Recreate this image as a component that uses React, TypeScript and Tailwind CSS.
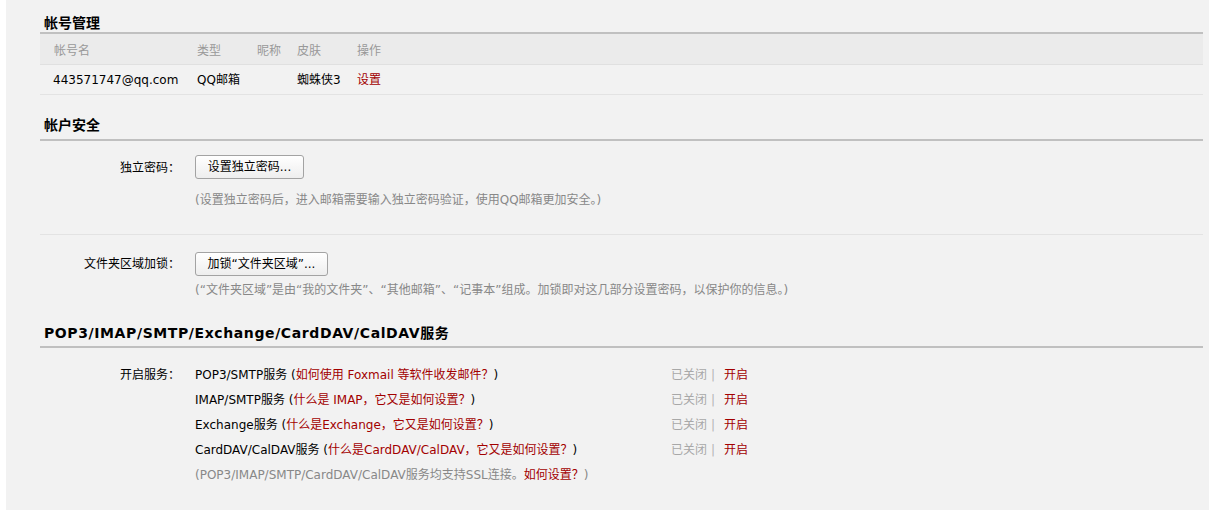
import React from "react";

const RED = "text-[#a20000]";

function Btn({ children, w }: { children: React.ReactNode; w: string }) {
  return (
    <button
      className={`h-[24px] ${w} rounded-[3px] border border-[#a3a3a3] bg-gradient-to-b from-[#ffffff] to-[#eeeeee] text-[12px] leading-[22px] text-black`}
    >
      {children}
    </button>
  );
}

function SvcRow({
  label,
  name,
  help,
}: {
  label?: string;
  name: string;
  help: React.ReactNode;
}) {
  return (
    <div className="flex h-[25px] items-center leading-[25px]">
      <div className="w-[155px] shrink-0 pr-[15px] text-right">{label}</div>
      <div className="w-[476px] shrink-0 whitespace-nowrap">
        {name} (<span className={RED}>{help}</span>)
      </div>
      <div className="whitespace-nowrap">
        <span className="text-[#a8a8a8]">已关闭</span>
        <span className="ml-[4px] text-[#b5b5b5]">|</span>
        <span className={`ml-[9px] ${RED}`}>开启</span>
      </div>
    </div>
  );
}

export default function App() {
  return (
    <div className="flex h-[511px] w-[1209px] bg-white font-['DejaVu_Sans','Noto_Sans_CJK_SC',sans-serif] text-[12px] text-black">
      <div className="ml-[6px] h-[510px] flex-1 bg-[#f2f2f2] pl-[34px] pr-[6px]">
        {/* 帐号管理 */}
        <div className="border-b-2 border-[#c0c0c0] pb-[1px] pl-[4px] pt-[15px] text-[14px] font-bold leading-[16px]">
          帐号管理
        </div>
        <div className="flex h-[31px] items-center border-b border-[#e0e0e0] bg-[#ebebeb] pt-[3px] text-[#999999]">
          <div className="w-[157px] pl-[14px]">帐号名</div>
          <div className="w-[60px]">类型</div>
          <div className="w-[40px]">昵称</div>
          <div className="w-[60px]">皮肤</div>
          <div>操作</div>
        </div>
        <div className="flex h-[30px] items-center border-b border-[#e3e3e3]">
          <div className="w-[157px] pl-[13px]">443571747@qq.com</div>
          <div className="w-[60px]">QQ邮箱</div>
          <div className="w-[40px]"></div>
          <div className="w-[60px]">蜘蛛侠3</div>
          <div className={RED}>设置</div>
        </div>

        {/* 帐户安全 */}
        <div className="mt-[22px] border-b-2 border-[#c0c0c0] pb-[6px] pl-[4px] text-[14px] font-bold leading-[16px]">
          帐户安全
        </div>
        <div className="border-b border-[#e3e3e3] pb-[24px]">
          <div className="mt-[14px] flex items-center">
            <div className="w-[155px] shrink-0 pr-[15px] pt-[1px] text-right">独立密码：</div>
            <Btn w="w-[109px]">设置独立密码...</Btn>
          </div>
          <div className="mt-[11px] pl-[155px] leading-[20px] text-[#888888]">
            (设置独立密码后，进入邮箱需要输入独立密码验证，使用QQ邮箱更加安全。)
          </div>
        </div>
        <div className="mt-[17px] flex items-center">
          <div className="w-[155px] shrink-0 pr-[15px] text-right">文件夹区域加锁：</div>
          <Btn w="w-[133px]">加锁“文件夹区域”...</Btn>
        </div>
        <div className="mt-[4px] pl-[155px] leading-[20px] text-[#888888]">
          (“文件夹区域”是由“我的文件夹”、“其他邮箱”、“记事本”组成。加锁即对这几部分设置密码，以保护你的信息。)
        </div>

        {/* POP3 */}
        <div className="mt-[25px] border-b-2 border-[#c0c0c0] pb-[5px] pl-[4px] text-[14px] font-bold leading-[16px] tracking-[0.6px]">
          POP3/IMAP/SMTP/Exchange/CardDAV/CalDAV服务
        </div>
        <div className="mt-[15px]">
          <SvcRow label="开启服务：" name="POP3/SMTP服务" help="如何使用 Foxmail 等软件收发邮件？" />
          <SvcRow name="IMAP/SMTP服务" help="什么是 IMAP，它又是如何设置？" />
          <SvcRow name="Exchange服务" help="什么是Exchange，它又是如何设置？" />
          <SvcRow name="CardDAV/CalDAV服务" help="什么是CardDAV/CalDAV，它又是如何设置？" />
          <div className="flex h-[25px] items-center leading-[25px]">
            <div className="w-[155px] shrink-0"></div>
            <div className="whitespace-nowrap text-[#888888]">
              (POP3/IMAP/SMTP/CardDAV/CalDAV服务均支持SSL连接。<span className={RED}>如何设置？</span>)
            </div>
          </div>
        </div>
      </div>
    </div>
  );
}
